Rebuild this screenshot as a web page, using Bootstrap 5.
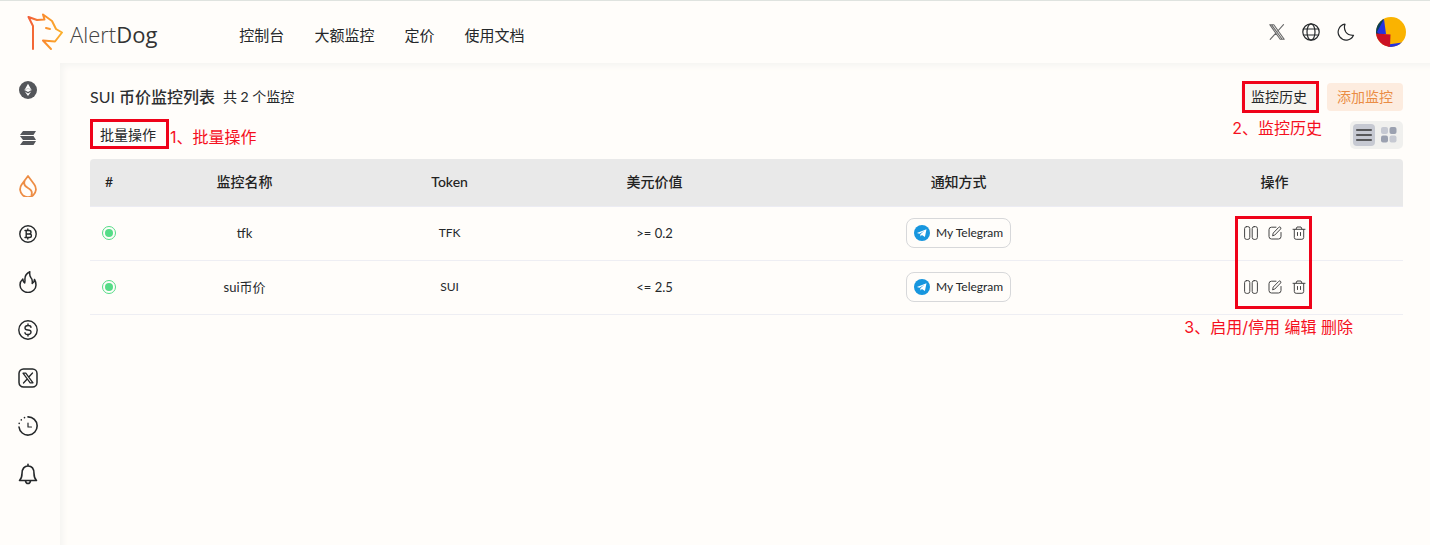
<!DOCTYPE html>
<html lang="zh-CN">
<head>
<meta charset="utf-8">
<meta name="viewport" content="width=device-width, initial-scale=1">
<title>AlertDog</title>
<link href="https://cdn.jsdelivr.net/npm/bootstrap@5.3.0/dist/css/bootstrap.min.css" rel="stylesheet">
<style>
body{background:#fffdfa;color:#25282a;font-family:Lato,"Noto Sans CJK SC",sans-serif;font-size:14px;line-height:20px}
svg{display:block;fill:none;stroke:currentColor;stroke-linecap:round;stroke-linejoin:round}
svg.solid{stroke:none}
a{color:inherit;text-decoration:none}
.topbar{height:63px;border-top:1px solid #dfe3df;padding:0 24px 0 26px}
.brand{gap:6px}
.logo-text{font-family:"Open Sans","Noto Sans",sans-serif;font-size:22px;line-height:28px;font-weight:300;color:#444;padding-top:4px}
.logo-text b{font-weight:400;color:#333}
.topnav{gap:30px;font-size:15px;margin-left:82px;padding-top:5px}
.tools-nav{gap:17px}
.side{width:60px;padding:15px 4px 0 0;gap:24px;flex:none}
.side a{height:24px;display:flex;align-items:center}
.page-area{padding:20px 27px 0 30px;min-height:calc(100vh - 63px);box-shadow:inset 6px 6px 6px -3px #f5f4f1;min-width:0}
.title{font-size:16px;line-height:28px;font-weight:500;margin:0;color:#2c2e30}
.title span{font-weight:400}
.actions{margin-top:10px}
.head-tools{gap:10px}
.tool{border:0;border-radius:4px;height:28px;padding:0 10px;font-size:14px;line-height:28px;background:none;color:#25282a}
.tool-history{background:#f6f5f0}
.tool-add{background:#fdecdf;color:#ea8c45}
.note{color:#f5101e;font-family:Inter,"Noto Sans CJK SC",sans-serif;font-size:16px;line-height:20px;white-space:nowrap}
.frame{position:absolute;border:3px solid #ef0219;pointer-events:none}
.frame-btn{inset:-2px -2px -2px 1px}
.frame-batch{inset:-2px -3px 0 0}
.note-history{position:absolute;top:35px;right:-5px}
.toggle{background:#f0f0ee;border-radius:5px;padding:3px;gap:3px;height:28px}
.toggle button{border:0;background:none;border-radius:4px;width:22px;height:22px;padding:0;display:flex;align-items:center;justify-content:center}
.toggle .on{background:#c6c9d2}
.monitor{--bs-table-bg:transparent;table-layout:fixed;margin:10px 0 0;text-align:center;vertical-align:middle;color:#25282a;font-size:13px}
.monitor thead{vertical-align:middle}
.monitor th{background:#e9e9e9;font-size:14px;font-weight:500;height:47px;padding:0;border-color:#ececf3;color:#222}
.monitor th:first-child{border-radius:4px 0 0 0}
.monitor th:last-child{border-radius:0 4px 0 0}
.monitor td{height:54px;padding:0;border-color:#eeeef3;color:inherit}
.monitor td.token{font-size:12px}
.c1{width:2.9%}.c2,.c4{width:17.75%}.c3{width:13.48%}.c5{width:28.56%}
.dot{width:14px;height:14px;border:1px solid #55dc87;border-radius:50%;padding:2px;display:block;margin:0 auto}
.dot::before{content:"";display:block;width:8px;height:8px;background:#55dc87;border-radius:50%}
.channel{border:1px solid #d7d8da;border-radius:8px;height:30px;padding:0 7px;gap:6px;color:inherit;font-size:12px;vertical-align:middle}
.ops{gap:10px}
.ops button{border:0;background:none;padding:0;color:#444}
.frame-ops{top:9px;right:91px;width:77px;height:93px}
.note-ops{position:absolute;top:110px;right:50px}
</style>
</head>
<body>
<svg width="0" height="0" class="position-absolute" aria-hidden="true">
<symbol id="pause" viewBox="0 0 14 14"><rect x=".6" y=".6" width="5.200" height="12.800" rx="2"/><rect x="8.200" y=".6" width="5.200" height="12.800" rx="2"/></symbol>
<symbol id="edit" viewBox="0 0 14 14"><path d="M8 1.200H3.500Q1 1.200 1 3.700V10.500Q1 13 3.500 13H10.500Q13 13 13 10.500V6.500M4.700 9.500 5.200 7.100 10.800 1.300Q11.700.5 12.500 1.300T12.600 3L7 8.800Z"/></symbol>
<symbol id="trash" viewBox="0 0 14 14"><path d="M1 3.300H13M4 3.200 5 1H9L10 3.200M2.300 3.500V11.500Q2.300 13.300 4.200 13.300H9.800Q11.700 13.300 11.700 11.500V3.500M5.500 6.500V9.500M8.500 6.500V9.500"/></symbol>
<symbol id="plane" viewBox="0 0 16 16"><circle cx="8" cy="8" r="8" fill="#1796de"/><path d="M2.900 7.900 12.500 4.200 10.900 12.100 7.900 9.900 6.500 11.400 6.300 9.200 10.500 5.700 5.400 8.800Z" fill="#fff"/></symbol>
</svg>

<header class="topbar d-flex align-items-center">
  <a href="#" class="brand d-flex align-items-center" aria-label="AlertDog">
    <svg width="38" height="38" viewBox="0 0 38 38" stroke-width="2"><defs><linearGradient id="dog" gradientUnits="userSpaceOnUse" x1="2" y1="20" x2="36" y2="18"><stop stop-color="#f15a3a"/><stop offset=".5" stop-color="#fa8f2e"/><stop offset="1" stop-color="#fbb02b"/></linearGradient></defs><path stroke="url(#dog)" d="M7 36V13L2.500 4 11 7 18.500 6.500 17 1.500 26 8 30 16 36 19.500 29 28.500 17 27.500 25 36M20 15 24 16"/></svg>
    <span class="logo-text">Alert<b>Dog</b></span>
  </a>
  <nav class="topnav d-flex"><a href="#">控制台</a><a href="#">大额监控</a><a href="#">定价</a><a href="#">使用文档</a></nav>
  <div class="tools-nav d-flex align-items-center ms-auto">
    <a href="#" aria-label="X" style="color:#666"><svg width="16" height="16" viewBox="0 0 16 16" stroke-width="1.100"><path d="M.8 .7H4.800L15.200 15.300H11.200ZM14.500 .7 8.800 7M6.900 9.200 1.200 15.300M2.600 .9 13 15"/></svg></a>
    <a href="#" aria-label="语言"><svg width="18" height="18" viewBox="0 0 18 18" stroke-width="1.200"><circle cx="9" cy="9" r="8.200"/><ellipse cx="9" cy="9" rx="4" ry="8.200"/><path d="M1.500 6H16.500M1.500 12H16.500"/></svg></a>
    <a href="#" aria-label="主题"><svg width="18" height="18" viewBox="0 0 18 18" stroke-width="1.200"><path d="M8 1.200A8 8 0 1 0 16.500 12.300Q11 12.500 8.800 9 6.500 5 8 1.200Z"/></svg></a>
    <a href="#" class="ms-1" aria-label="账户"><svg class="solid" width="30" height="30" viewBox="0 0 30 30"><clipPath id="round"><circle cx="15" cy="15" r="15"/></clipPath><g clip-path="url(#round)"><path fill="#fab300" d="M0 0H30V30H0Z"/><path fill="#093f59" d="M0 0H8L6 17H0Z"/><path fill="#2432df" d="M8 2 1 15 3 17H10ZM12 27.500 30 25V30H12Z"/><path fill="#cb1224" d="M0 16.500 14.500 17.500 14 30H0Z"/></g></svg></a>
  </div>
</header>

<div class="d-flex">
  <nav class="side d-flex flex-column align-items-center" aria-label="侧栏">
    <a href="#" aria-label="Ethereum"><svg class="solid" width="18" height="18" viewBox="0 0 18 18"><circle cx="9" cy="9" r="9" fill="#54565a"/><path fill="#fff" d="M9 2.800 12.500 9 9 11 5.500 9ZM5.800 10.500 9 12.400 12.200 10.500 9 15Z"/><path d="M5.500 9 9 7.500 12.500 9" stroke="#aaa" stroke-width=".6"/></svg></a>
    <a href="#" aria-label="Solana"><svg class="solid" width="18" height="16" viewBox="0 0 18 16"><path fill="#54565a" d="M4 1H17L14.500 5H1ZM1 6H14.500L17 10H4ZM4 11H17L14.500 15H1Z"/></svg></a>
    <a href="#" aria-label="Sui" style="color:#ed8d45"><svg width="18" height="22" viewBox="0 0 18 22" stroke-width="1.800"><path d="M9 1Q12 5 15.300 9.500A7.900 7.900 0 1 1 2.700 9.500Q6 5 9 1ZM5.500 6.500Q4 10.500 9 13 14 15.500 12.500 20"/></svg></a>
    <a href="#" aria-label="Bitcoin"><svg width="18" height="18" viewBox="0 0 18 18" stroke-width="1.400"><circle cx="9" cy="9" r="8.200"/><path d="M6 5.500H10Q12 5.500 12 7.200T10 9H7.200M7.200 5.500V12.500M6 12.500H10.300Q12.400 12.500 12.400 10.700T10.300 9M8.800 4V5.500M8.800 12.500V14"/></svg></a>
    <a href="#" aria-label="热门"><svg width="18" height="22" viewBox="0 0 18 22" stroke-width="1.500"><path d="M10.800 .8C7 2.500 5.500 5.500 6 9.500L5.700 12Q4 10.500 3.800 8 1 10.500 1 14A8 7.500 0 0 0 17 14Q17 11 15.500 8.500 15.300 11.500 13.200 12.500 13.800 8.500 11.800 6.500 10.300 4.500 10.800 .8Z"/></svg></a>
    <a href="#" aria-label="价格"><svg width="20" height="20" viewBox="0 0 20 20" stroke-width="1.400"><circle cx="10" cy="10" r="9.200"/><path d="M13 7.300Q12.800 5.500 10 5.500T7 7.700 10 10 13 12.200 10 14.500 7 12.700M10 4V5.500M10 14.500V16"/></svg></a>
    <a href="#" aria-label="X 监控"><svg width="20" height="20" viewBox="0 0 20 20" stroke-width="1.500"><rect x="1" y="1" width="18" height="18" rx="4.500"/><path stroke-width="1.300" d="M5 5.200H7.800L15 14.800H12.200ZM14.500 5 10.800 9M9.200 11 5.500 15"/></svg></a>
    <a href="#" aria-label="历史"><svg width="20" height="20" viewBox="0 0 20 20" stroke-width="1.600"><path d="M10 .9A9.100 9.100 0 1 1 1 11"/><path d="M1.200 7.500V7.400M3.300 4V3.900M6.500 1.700V1.600"/><path stroke-width="1.200" d="M10 7V11H13.500"/></svg></a>
    <a href="#" aria-label="通知"><svg width="20" height="22" viewBox="0 0 20 22" stroke-width="1.600"><path d="M1.500 17.500Q4 15 4 10.500C4 5.500 6.500 3 10 3S16 5.500 16 10.500Q16 15 18.500 17.500ZM10 1.200V3M7.500 18Q8 20.500 10 20.500T12.500 18"/></svg></a>
  </nav>

  <main class="page-area flex-grow-1">
    <div class="d-flex align-items-center">
      <h1 class="title"><span>SUI</span> 币价监控列表</h1>
      <span class="ms-2">共 2 个监控</span>
      <div class="head-tools d-flex ms-auto">
        <div class="position-relative">
          <button type="button" class="tool tool-history">监控历史</button>
          <div class="frame frame-btn"></div>
          <div class="note note-history">2、监控历史</div>
        </div>
        <button type="button" class="tool tool-add">添加监控</button>
      </div>
    </div>
    <div class="actions d-flex align-items-center">
      <div class="position-relative me-1">
        <button type="button" class="tool">批量操作</button>
        <div class="frame frame-batch"></div>
      </div>
      <div class="note pt-1">1、批量操作</div>
      <div class="toggle d-flex ms-auto">
        <button type="button" class="on" aria-label="列表视图"><svg width="16" height="12" viewBox="0 0 16 12" style="color:#333" stroke-width="1.400"><path d="M.7 1H15.300M.7 6H15.300M.7 11H15.300"/></svg></button>
        <button type="button" aria-label="网格视图"><svg class="solid" width="16" height="16" viewBox="0 0 16 16"><rect width="7" height="7" rx="2" fill="#c6c9d2"/><rect x="8.500" width="7" height="7" rx="2" fill="#9ba1b0"/><rect y="8.500" width="7" height="7" rx="2" fill="#9ba1b0"/><rect x="8.500" y="8.500" width="7" height="7" rx="2" fill="#c6c9d2"/></svg></button>
      </div>
    </div>

    <table class="table monitor">
      <thead><tr><th class="c1" scope="col">#</th><th class="c2" scope="col">监控名称</th><th class="c3" scope="col">Token</th><th class="c4" scope="col">美元价值</th><th class="c5" scope="col">通知方式</th><th scope="col">操作</th></tr></thead>
      <tbody>
        <tr>
          <td><span class="dot"></span></td><td>tfk</td><td class="token">TFK</td><td>&gt;= 0.2</td>
          <td><span class="channel d-inline-flex align-items-center"><svg class="solid" width="16" height="16"><use href="#plane"/></svg>My Telegram</span></td>
          <td class="position-relative">
            <div class="ops d-flex justify-content-center"><button type="button" aria-label="停用"><svg width="14" height="14"><use href="#pause"/></svg></button><button type="button" aria-label="编辑"><svg width="14" height="14"><use href="#edit"/></svg></button><button type="button" aria-label="删除"><svg width="14" height="14"><use href="#trash"/></svg></button></div>
            <div class="frame frame-ops"></div>
            <div class="note note-ops">3、启用/停用 编辑 删除</div>
          </td>
        </tr>
        <tr>
          <td><span class="dot"></span></td><td>sui币价</td><td class="token">SUI</td><td>&lt;= 2.5</td>
          <td><span class="channel d-inline-flex align-items-center"><svg class="solid" width="16" height="16"><use href="#plane"/></svg>My Telegram</span></td>
          <td>
            <div class="ops d-flex justify-content-center"><button type="button" aria-label="停用"><svg width="14" height="14"><use href="#pause"/></svg></button><button type="button" aria-label="编辑"><svg width="14" height="14"><use href="#edit"/></svg></button><button type="button" aria-label="删除"><svg width="14" height="14"><use href="#trash"/></svg></button></div>
          </td>
        </tr>
      </tbody>
    </table>
  </main>
</div>
<script src="https://cdn.jsdelivr.net/npm/bootstrap@5.3.0/dist/js/bootstrap.bundle.min.js"></script>
</body>
</html>
